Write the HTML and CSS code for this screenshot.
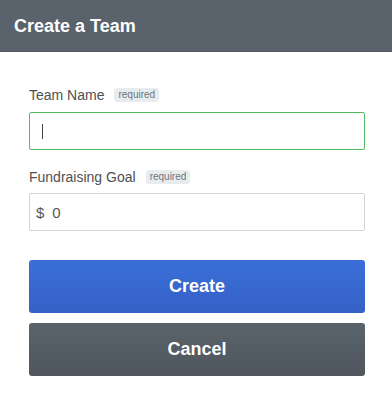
FILE: index.html
```
<!DOCTYPE html>
<html lang="en">
<head>
<meta charset="utf-8">
<title>Create a Team</title>
<link rel="stylesheet" href="styles.css">
</head>
<body>
<header class="topbar">
  <h1 class="title">Create a Team</h1>
</header>
<main class="form">
  <div class="field">
    <div class="label-row">
      <span class="label">Team Name</span>
      <span class="badge">required</span>
    </div>
    <div class="input input-focus"><span class="caret"></span></div>
  </div>
  <div class="field">
    <div class="label-row">
      <span class="label">Fundraising Goal</span>
      <span class="badge">required</span>
    </div>
    <div class="input input-money"><span class="prefix">$</span><span class="value">0</span></div>
  </div>
  <div class="actions">
    <button class="btn btn-primary" type="button">Create</button>
    <button class="btn btn-secondary" type="button">Cancel</button>
  </div>
</main>
</body>
</html>
```
FILE: styles.css
```
* { box-sizing: border-box; }
html, body { margin: 0; padding: 0; background: #ffffff; }
body { font-family: "Liberation Sans", Arial, sans-serif; width: 392px; height: 409px; overflow: hidden; }

.topbar {
  height: 52px;
  background: #5a636b;
  border-bottom: 1px solid #50585f;
  display: flex;
  align-items: center;
  padding-left: 14px;
}
.title {
  margin: 0;
  color: #ffffff;
  font-size: 18px;
  font-weight: bold;
  line-height: 20px;
}

.form {
  padding: 35px 27px 0 29px;
  display: flex;
  flex-direction: column;
}
.field { display: flex; flex-direction: column; }
.field + .field { margin-top: 19px; }

.label-row {
  display: flex;
  align-items: center;
  height: 16px;
  margin-bottom: 9px;
}
.field + .field .label-row { margin-bottom: 8px; }
.label {
  font-size: 14px;
  color: #505050;
  line-height: 16px;
}
.badge {
  margin-left: 10px;
  font-size: 10px;
  line-height: 12px;
  padding: 1px 4px;
  background: #e9ecef;
  color: #6c757d;
  border-radius: 3px;
}

.input {
  height: 38px;
  border: 1px solid #ced4da;
  border-radius: 2px;
  display: flex;
  align-items: center;
  background: #fff;
}
.input-focus {
  border-color: #52bc63;
  padding-left: 12px;
}
.caret {
  width: 1px;
  height: 15px;
  background: #444;
}
.input-money {
  padding-left: 6px;
  font-size: 15px;
  color: #555;
}
.prefix { margin-right: 8px; }

.actions {
  margin-top: 29px;
  display: flex;
  flex-direction: column;
  gap: 10px;
}
.btn {
  height: 53px;
  border: none;
  border-radius: 3px;
  color: #ffffff;
  font-family: "Liberation Sans", Arial, sans-serif;
  font-size: 18px;
  font-weight: bold;
  padding: 0;
  width: 100%;
}
.btn-primary {
  background: linear-gradient(#3a6fd8, #3461c6);
}
.btn-secondary {
  background: linear-gradient(#5a636b, #4f565d);
}
```
